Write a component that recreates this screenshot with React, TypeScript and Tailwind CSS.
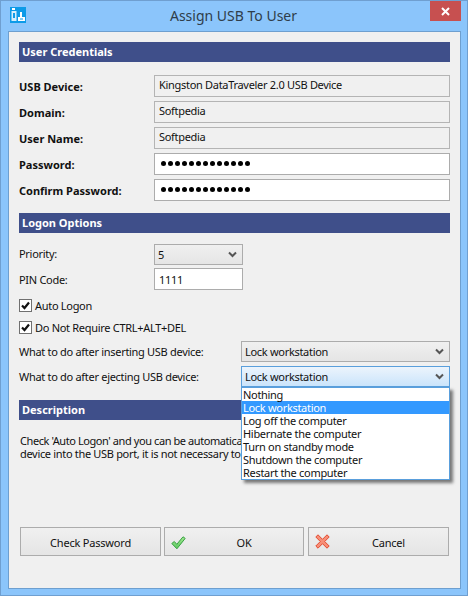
import { ReactNode } from 'react'

const uiFont = "font-['Noto_Sans',sans-serif]"

const OPTIONS = [
  'Nothing',
  'Lock workstation',
  'Log off the computer',
  'Hibernate the computer',
  'Turn on standby mode',
  'Shutdown the computer',
  'Restart the computer',
]

function SectionHeader({ title }: { title: string }) {
  return (
    <div className="h-5 bg-[#3f4f8a] pl-[3px] text-[11px] leading-5 font-bold text-white">
      {title}
    </div>
  )
}

function Chevron() {
  return (
    <svg width="9" height="7" viewBox="0 0 9 7" className="shrink-0">
      <path d="M1 1.5 L4.500 5 L8 1.5" fill="none" stroke="#555" strokeWidth="2" />
    </svg>
  )
}

function ComboBox({ value, focused, className }: { value: string; focused?: boolean; className: string }) {
  return (
    <div
      className={
        'flex h-[21px] items-center justify-between border pr-[5px] pl-[3px] text-[11px] tracking-[-0.3px] ' +
        (focused
          ? 'border-[#5a9fdc] bg-gradient-to-b from-[#ecf4fc] to-[#cae4fb] '
          : 'border-[#acacac] bg-gradient-to-b from-[#f0f0f0] to-[#e5e5e5] ') +
        className
      }
    >
      <span className="pt-[2px]">{value}</span>
      <Chevron />
    </div>
  )
}

function Row({ label, children }: { label: string; children: ReactNode }) {
  return (
    <div className="flex h-[22px] items-center">
      <div className="w-[135px] pt-[2px] text-[11px] font-bold">{label}</div>
      {children}
    </div>
  )
}

function ReadOnlyField({ value }: { value: string }) {
  return (
    <div className="flex h-[22px] flex-1 items-center border border-[#b4b4b4] bg-[#f0f0f0] pb-[2px] pl-1 text-[11px] tracking-[-0.3px]">
      {value}
    </div>
  )
}

function PasswordField() {
  return (
    <div className="flex h-[22px] flex-1 items-center gap-[2px] border border-[#acacac] bg-white pb-[2px] pl-[6px]">
      {Array.from({ length: 13 }).map((_, i) => (
        <span key={i} className="h-[5px] w-[5px] rounded-full bg-black" />
      ))}
    </div>
  )
}

function CheckItem({ label, className }: { label: string; className: string }) {
  return (
    <div className={'flex h-[13px] items-center gap-[3px] text-[11px] tracking-[-0.3px] ' + className}>
      <div className="flex h-[13px] w-[13px] items-center justify-center border border-[#707070] bg-white">
        <svg width="9" height="9" viewBox="0 0 9 9">
          <path d="M1 4.500 L3.500 7 L8 1.500" fill="none" stroke="#111" strokeWidth="2.200" />
        </svg>
      </div>
      <span className="pt-[2px]">{label}</span>
    </div>
  )
}

function DialogButton({ label, icon, className }: { label: string; icon?: ReactNode; className: string }) {
  return (
    <button className={'relative flex h-[29px] items-center justify-center border border-[#acacac] bg-gradient-to-b from-[#f0f0f0] to-[#e5e5e5] pt-[3px] text-[11px] tracking-[-0.2px] ' + className}>
      {icon}
      {label}
    </button>
  )
}

function OkIcon() {
  return (
    <svg width="15" height="14" viewBox="0 0 15 14" className="absolute top-[8px] left-[6px]">
      <defs>
        <linearGradient id="okFill" x1="0" y1="0" x2="0" y2="1">
          <stop offset="0" stopColor="#a6ea93" />
          <stop offset="1" stopColor="#58c65c" />
        </linearGradient>
      </defs>
      <path d="M0.800 7.500 L3.300 5.500 L5.800 8.300 L12 0.800 L14.200 2.400 L5.900 12.800 Z" fill="url(#okFill)" stroke="#37a043" strokeWidth="1" strokeLinejoin="round" />
    </svg>
  )
}

function CancelIcon() {
  return (
    <svg width="15" height="15" viewBox="0 0 15 15" className="absolute top-[6px] left-[6px]">
      <path d="M3 0.800 L7.500 5.300 L12 0.800 L14.200 3 L9.700 7.500 L14.200 12 L12 14.200 L7.500 9.700 L3 14.200 L0.800 12 L5.300 7.500 L0.800 3 Z" fill="#f78f78" stroke="#e34b30" strokeWidth="1" strokeLinejoin="round" />
    </svg>
  )
}

function AppIcon() {
  return (
    <svg width="16" height="16" viewBox="0 0 16 16" className="shrink-0">
      <rect width="16" height="16" fill="#0d9be8" />
      <rect x="2" y="1" width="3" height="2" fill="#fff" />
      <rect x="1.500" y="4" width="5" height="10" fill="#d6effc" />
      <rect x="3" y="6" width="2" height="5" fill="#0d9be8" />
      <rect x="10" y="5" width="2" height="5" fill="#fff" />
      <rect x="8" y="10" width="7" height="4" fill="#fff" />
      <rect x="10" y="11.500" width="3" height="1" fill="#0d9be8" />
    </svg>
  )
}

export default function App() {
  return (
    <div className={'flex h-[596px] w-[468px] flex-col border border-[#6f9fd0] bg-[#8bc5fb] text-[#111] ' + uiFont}>
      <div className="flex h-[30px] shrink-0 items-start">
        <div className="mt-[6px] ml-[9px]">
          <AppIcon />
        </div>
        <div className="mt-[5px] flex-1 pl-[11px] text-center text-[14px] leading-5 text-[#2f3d4a]">
          Assign USB To User
        </div>
        <div className="mr-[6px] flex h-5 w-[31px] items-center justify-center bg-[#c75050]">
          <svg width="9" height="9" viewBox="0 0 9 9">
            <path d="M1 1 L8 8 M8 1 L1 8" stroke="#fff" strokeWidth="2" />
          </svg>
        </div>
      </div>

      <div className="mr-[6px] ml-[7px] h-[558px] border border-[#6e9fcf] bg-[#f0f0f0] px-[10px] pt-[10px]">
        <SectionHeader title="User Credentials" />
        <div className="mt-[13px] flex flex-col gap-1">
          <Row label="USB Device:"><ReadOnlyField value="Kingston DataTraveler 2.0 USB Device" /></Row>
          <Row label="Domain:"><ReadOnlyField value="Softpedia" /></Row>
          <Row label="User Name:"><ReadOnlyField value="Softpedia" /></Row>
          <Row label="Password:"><PasswordField /></Row>
          <Row label="Confirm Password:"><PasswordField /></Row>
        </div>

        <div className="mt-3">
          <SectionHeader title="Logon Options" />
        </div>
        <div className="mt-[11px] flex h-[21px] items-center text-[11px] tracking-[-0.3px]">
          <div className="w-[135px]">Priority:</div>
          <ComboBox value="5" className="w-[89px]" />
        </div>
        <div className="mt-[3px] flex h-[22px] items-center text-[11px] tracking-[-0.3px]">
          <div className="w-[135px] pt-[2px]">PIN Code:</div>
          <div className="flex h-[22px] w-[89px] items-center border border-[#acacac] bg-white pt-[2px] pl-1">1111</div>
        </div>
        <CheckItem label="Auto Logon" className="mt-[9px]" />
        <CheckItem label="Do Not Require CTRL+ALT+DEL" className="mt-[9px]" />

        <div className="mt-[7px] flex h-[21px] items-center text-[11px] tracking-[-0.3px]">
          <div className="w-[222px] pt-[2px]">What to do after inserting USB device:</div>
          <ComboBox value="Lock workstation" className="flex-1" />
        </div>
        <div className="mt-1 flex h-[21px] items-center text-[11px] tracking-[-0.3px]">
          <div className="w-[222px] pt-[2px]">What to do after ejecting USB device:</div>
          <div className="relative flex-1">
            <ComboBox value="Lock workstation" focused className="w-full" />
            <div className="absolute top-[21px] right-0 left-0 z-10 border border-[#5a9fdc] bg-white shadow-[3px_3px_3px_rgba(0,0,0,0.5)]">
              {OPTIONS.map((option) => (
                <div
                  key={option}
                  className={'h-[13px] pl-[1px] text-[11px] leading-[13px] ' + (option === 'Lock workstation' ? 'bg-[#3399ff] text-white' : '')}
                >
                  {option}
                </div>
              ))}
            </div>
          </div>
        </div>

        <div className="mt-[13px]">
          <SectionHeader title="Description" />
        </div>
        <div className="mt-[14px] ml-px text-[11px] leading-[13px] whitespace-nowrap">
          <div className="tracking-[-0.42px]">Check 'Auto Logon' and you can be automatica</div>
          <div className="tracking-[-0.32px]">device into the USB port, it is not necessary to</div>
        </div>

        <div className="mt-[67px] flex pl-px">
          <DialogButton label="Check Password" className="w-[141px]" />
          <DialogButton label="OK" icon={<OkIcon />} className="ml-[3px] w-[140px] pl-[20px]" />
          <DialogButton label="Cancel" icon={<CancelIcon />} className="ml-1 w-[141px] pl-[20px]" />
        </div>
      </div>
    </div>
  )
}
